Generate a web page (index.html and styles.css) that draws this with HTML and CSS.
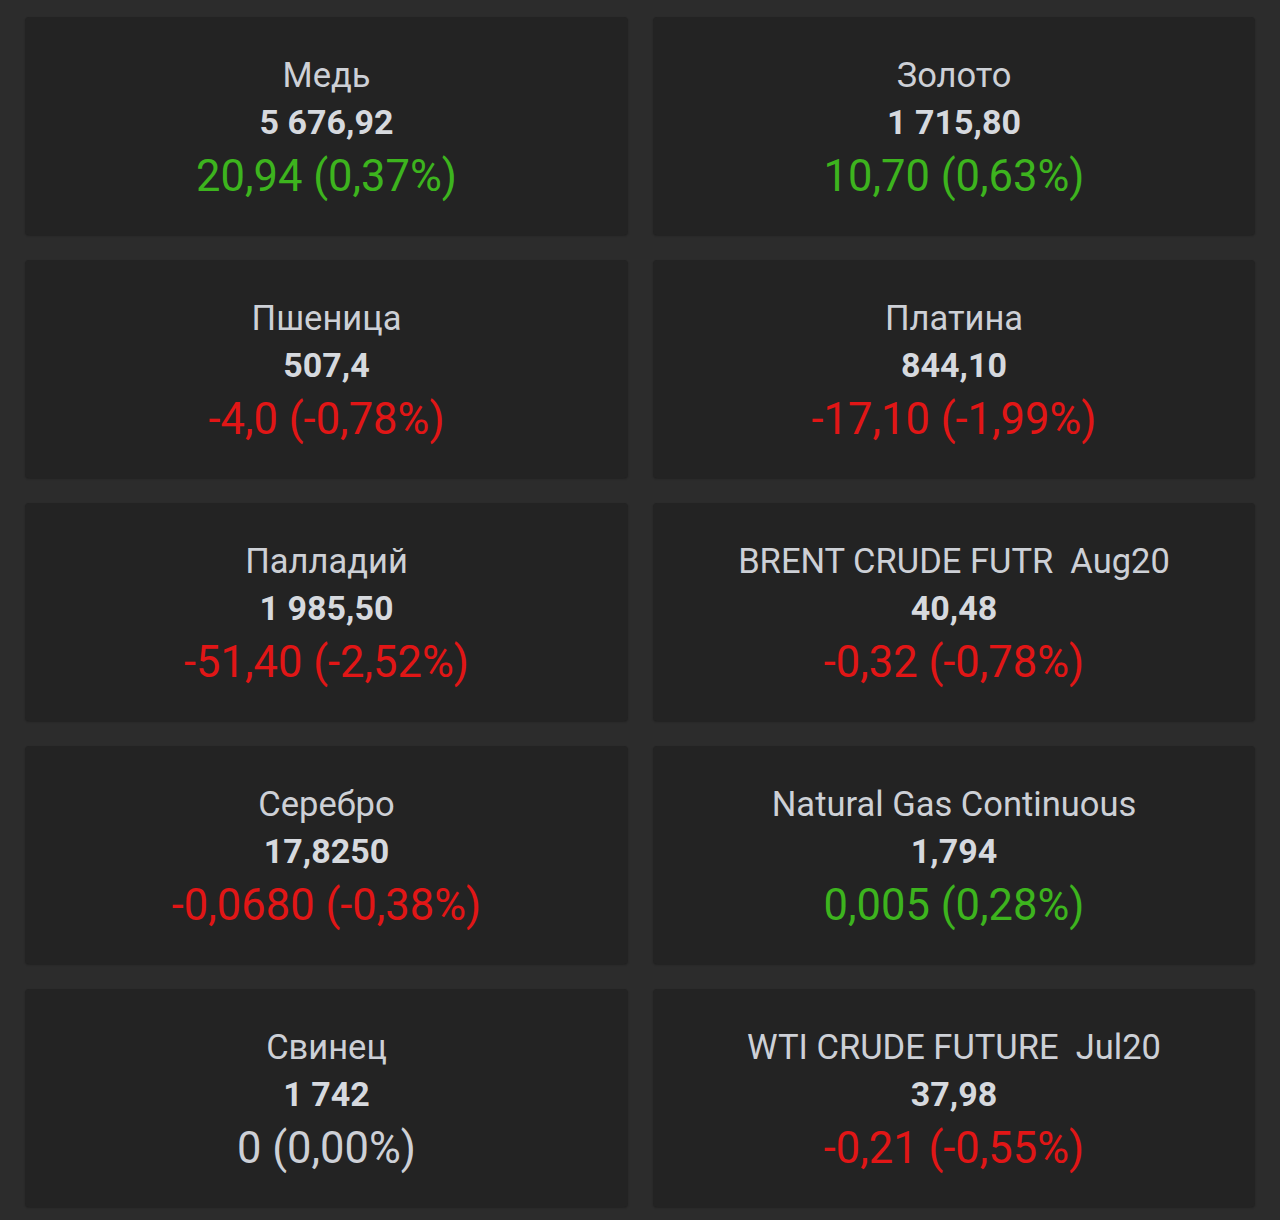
FILE: index.html
```html
<!DOCTYPE html>
<html lang="ru">
<head>
<meta charset="utf-8">
<link rel="stylesheet" href="styles.css">
</head>
<body>
<main class="grid">
  <div class="card"><div class="name">Медь</div><div class="price">5 676,92</div><div class="chg up">20,94 (0,37%)</div></div>
  <div class="card"><div class="name">Золото</div><div class="price">1 715,80</div><div class="chg up">10,70 (0,63%)</div></div>
  <div class="card"><div class="name">Пшеница</div><div class="price">507,4</div><div class="chg down">-4,0 (-0,78%)</div></div>
  <div class="card"><div class="name">Платина</div><div class="price">844,10</div><div class="chg down">-17,10 (-1,99%)</div></div>
  <div class="card"><div class="name">Палладий</div><div class="price">1 985,50</div><div class="chg down">-51,40 (-2,52%)</div></div>
  <div class="card"><div class="name">BRENT CRUDE FUTR&nbsp; Aug20</div><div class="price">40,48</div><div class="chg down">-0,32 (-0,78%)</div></div>
  <div class="card"><div class="name">Серебро</div><div class="price">17,8250</div><div class="chg down">-0,0680 (-0,38%)</div></div>
  <div class="card"><div class="name">Natural Gas Continuous</div><div class="price">1,794</div><div class="chg up">0,005 (0,28%)</div></div>
  <div class="card"><div class="name">Свинец</div><div class="price">1 742</div><div class="chg flat">0 (0,00%)</div></div>
  <div class="card"><div class="name">WTI CRUDE FUTURE&nbsp; Jul20</div><div class="price">37,98</div><div class="chg down">-0,21 (-0,55%)</div></div>
</main>
</body>
</html>
```
FILE: styles.css
```css
html, body {
  margin: 0;
  padding: 0;
  background: #2c2c2c;
}
body {
  font-family: Roboto, "Noto Sans", sans-serif;
  width: 1280px;
  height: 1220px;
  overflow: hidden;
}
.grid {
  display: grid;
  grid-template-columns: 603px 602px;
  grid-auto-rows: 218px;
  column-gap: 25px;
  row-gap: 25px;
  padding: 17px 25px 0 25px;
}
.card {
  background: #232323;
  border-radius: 4px;
  box-shadow: 0 1px 2px rgba(0,0,0,0.25);
  display: flex;
  flex-direction: column;
  align-items: center;
  padding-top: 36px;
  box-sizing: border-box;
}
.name {
  color: #cdd0d6;
  font-size: 34.5px;
  line-height: 44px;
}
.price {
  color: #d6d9de;
  font-size: 34px;
  font-weight: 700;
  line-height: 50px;
}
.chg {
  font-size: 43.5px;
  line-height: 60px;
}
.up { color: #3db41e; }
.down { color: #e11616; }
.flat { color: #cdd0d6; }
```
